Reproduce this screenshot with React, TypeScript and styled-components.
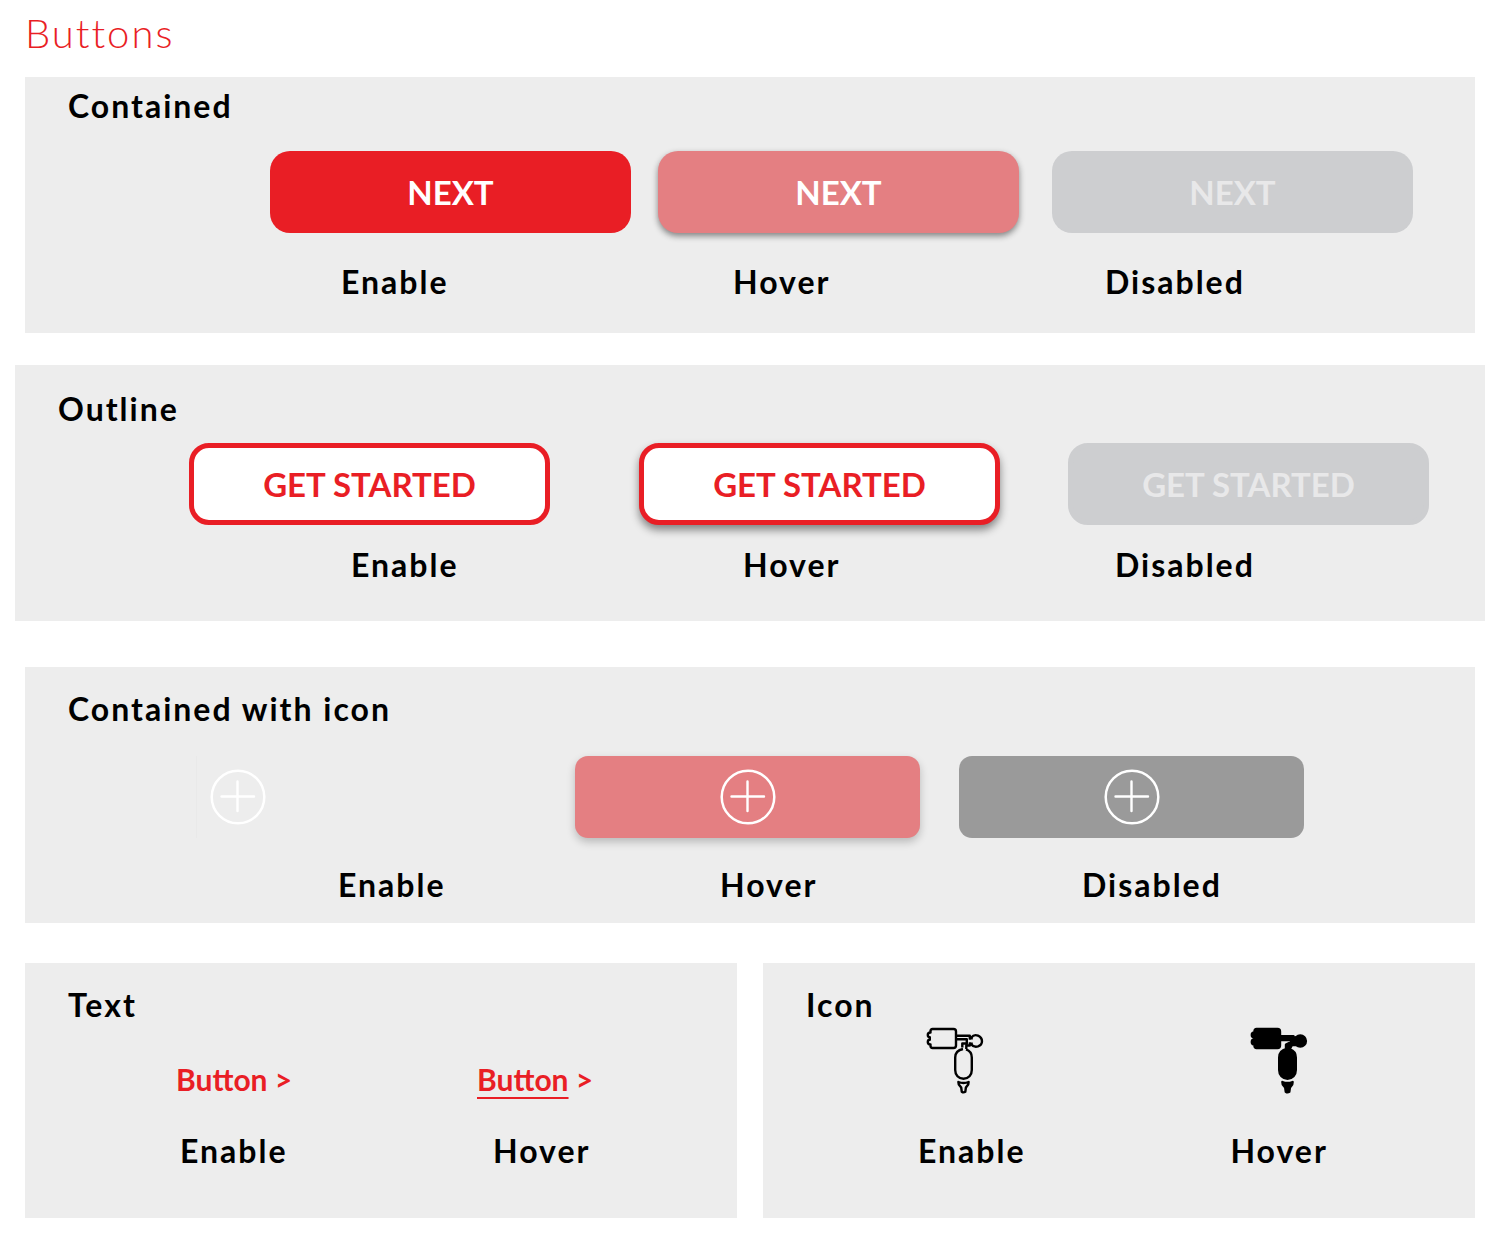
import React from "react";
import styled, { createGlobalStyle, css } from "styled-components";

const red = "#e91e25";
const softRed = "#e47f82";

const GlobalStyle = createGlobalStyle`
  *, *::before, *::after { box-sizing: border-box; }
  body {
    margin: 0;
    background: #fff;
    color: #000;
    font-family: Lato, "Open Sans", sans-serif;
  }
  button { font-family: inherit; cursor: pointer; }
  button:disabled { cursor: default; }
`;

const Page = styled.main`
  padding: 7px 15px 20px;
`;

const PageTitle = styled.h1`
  margin: 0 10px 18px;
  font-size: 40px;
  line-height: 52px;
  font-weight: 300;
  letter-spacing: 2px;
  color: ${red};
`;

const Panel = styled.section<{ $top: number; $bottom: number; $wide?: boolean }>`
  margin: 0 ${(p) => (p.$wide ? 0 : 10)}px;
  padding: ${(p) => p.$top}px 0 ${(p) => p.$bottom}px;
  background: #ededed;
`;

const Stack = styled.div<{ $gap: number }>`
  margin-top: ${(p) => p.$gap}px;
`;

const PanelPair = styled.div`
  display: grid;
  grid-template-columns: 1fr 1fr;
  gap: 26px;
  margin: 40px 10px 0;

  > section { margin: 0; }
`;

const labelText = css`
  font-size: 32px;
  line-height: 40px;
  font-weight: 700;
  letter-spacing: 2px;
`;

const PanelTitle = styled.h2`
  ${labelText}
  margin: 0;
  padding-left: 43px;
`;

const Row = styled.div<{ $inset: number; $columns: string; $gap: number }>`
  display: grid;
  grid-template-columns: ${(p) => p.$columns};
  justify-items: start;
  margin-top: ${(p) => p.$gap}px;
  padding-left: ${(p) => p.$inset}px;
`;

const StateLabel = styled.span`
  ${labelText}
`;

const BaseButton = styled.button`
  display: flex;
  align-items: center;
  justify-content: center;
  width: 361px;
  height: 82px;
  padding: 0;
  border: 0;
  border-radius: 20px;
  font-size: 33px;
  line-height: 40px;
  font-weight: 700;
`;

const ContainedButton = styled(BaseButton)<{ $hovered?: boolean }>`
  background: ${(p) => (p.$hovered ? softRed : red)};
  color: #fff;
  box-shadow: ${(p) => (p.$hovered ? "0 3px 6px rgba(0, 0, 0, 0.45)" : "none")};

  &:disabled { background: #cdced0; color: #e8e8e9; }
`;

const OutlineButton = styled(BaseButton)<{ $hovered?: boolean }>`
  border: 5px solid ${red};
  background: #fff;
  color: ${red};
  box-shadow: ${(p) => (p.$hovered ? "0 5px 9px rgba(0, 0, 0, 0.45)" : "none")};

  &:disabled { border-color: #cdced0; background: #cdced0; color: #e8e8e9; }
`;

const IconFillButton = styled(BaseButton)<{ $hovered?: boolean; $ghost?: boolean }>`
  width: 345px;
  border-radius: 13px;
  color: #fff;
  background: ${(p) => (p.$ghost ? "transparent" : softRed)};
  box-shadow: ${(p) => (p.$hovered ? "0 4px 9px rgba(0, 0, 0, 0.22)" : "none")};
  ${(p) =>
    p.$ghost &&
    css`
      justify-content: flex-start;
      padding-left: 13px;
      border-left: 1px solid #e9e9e9;
      border-radius: 0;
    `}

  &:disabled { background: #9a9a9a; }
`;

const TextButton = styled.button`
  padding: 0;
  border: 0;
  background: none;
  color: ${red};
  font-size: 30px;
  line-height: 40px;
  font-weight: 700;
  white-space: pre;
`;

const Underlined = styled.span`
  text-decoration: underline;
  text-decoration-thickness: 2px;
  text-underline-offset: 6px;
  text-decoration-skip-ink: none;
`;

const GlyphButton = styled.button`
  display: block;
  padding: 0;
  border: 0;
  background: none;
  color: #000;

  svg { display: block; }
`;

const PlusCircle = () => (
  <svg width="56" height="56" viewBox="0 0 56 56" fill="none" stroke="currentColor" strokeLinecap="round" aria-hidden="true">
    <circle cx="28" cy="28" r="26.3" strokeWidth="2.5" />
    <path d="M11.5 27.5H44M27.5 12.5V42" strokeWidth="2.4" />
  </svg>
);

const Airbrush = ({ filled }: { filled?: boolean }) => (
  <svg
    width="58"
    height="67"
    viewBox="0 0 58 67"
    fill={filled ? "currentColor" : "none"}
    stroke="currentColor"
    strokeWidth="2.4"
    strokeLinejoin="round"
    aria-hidden="true"
  >
    <path d="M6.5 2H27.5Q30 2 30 4.5V18.5Q30 21 27.5 21H6.5Q4.5 21 4.5 19V17.5Q1.8 17.5 1.8 15Q1.8 12.8 3.8 12.8V10.2Q1.8 10.2 1.8 8Q1.8 5.5 4.5 5.5V4Q4.5 2 6.5 2Z" />
    {filled ? (
      <>
        <path d="M31 9.2H43.5V13H31Z" />
        <circle cx="50.3" cy="14" r="5.6" />
        <path d="M43.5 10.5H47V18H42L39.5 22.5H36V17.5L39 16H41V13Z" />
      </>
    ) : (
      <>
        <path d="M30 8.7H43.8V12.5M30 12.3H40.8V16.5H36.3V20.5M43.8 15.5V18.5H40.3V22" />
        <path d="M45.3 10.5C47 8.3 49.5 7.6 52 8.6C57.4 11 57.2 17.8 52 19.4C49.3 20.1 46.8 19.3 45.3 17.4" />
        <path d="M43 11.3H46.8M43 16.7H46.8" />
      </>
    )}
    <path d="M37 22C32 23 29.2 26 29.2 30.5V43C29.2 48 32.5 51.8 37.5 51.8C42.5 51.8 45.8 48 45.8 43V30.5C45.8 26 43.5 23.5 40 22.3" />
    <path d="M32.4 55Q37.5 57 42.6 55L42.2 57.5L39.9 60.5L39.3 64.8Q37.5 66 35.8 64.8L35.2 60.5L32.8 57.5Z" />
  </svg>
);

const States = ({ names, ...row }: { names: string[]; $inset: number; $columns: string; $gap: number }) => (
  <Row {...row}>
    {names.map((name) => (
      <StateLabel key={name}>{name}</StateLabel>
    ))}
  </Row>
);

const three = ["Enable", "Hover", "Disabled"];
const two = ["Enable", "Hover"];

export default function App() {
  return (
    <>
      <GlobalStyle />
      <Page>
        <PageTitle>Buttons</PageTitle>

        <Panel $top={9} $bottom={31}>
          <PanelTitle>Contained</PanelTitle>
          <Row $inset={245} $columns="388fr 394fr 423fr" $gap={25}>
            <ContainedButton type="button">NEXT</ContainedButton>
            <ContainedButton type="button" $hovered>NEXT</ContainedButton>
            <ContainedButton type="button" disabled>NEXT</ContainedButton>
          </Row>
          <States names={three} $inset={316} $columns="392fr 372fr 370fr" $gap={29} />
        </Panel>

        <Stack $gap={32}>
          <Panel $top={24} $bottom={36} $wide>
            <PanelTitle>Outline</PanelTitle>
            <Row $inset={174} $columns="450fr 429fr 417fr" $gap={14}>
              <OutlineButton type="button">GET STARTED</OutlineButton>
              <OutlineButton type="button" $hovered>GET STARTED</OutlineButton>
              <OutlineButton type="button" disabled>GET STARTED</OutlineButton>
            </Row>
            <States names={three} $inset={336} $columns="392fr 372fr 370fr" $gap={20} />
          </Panel>
        </Stack>

        <Stack $gap={46}>
          <Panel $top={22} $bottom={18}>
            <PanelTitle>Contained with icon</PanelTitle>
            <Row $inset={171} $columns="379fr 384fr 516fr" $gap={27}>
              <IconFillButton type="button" aria-label="Add" $ghost><PlusCircle /></IconFillButton>
              <IconFillButton type="button" aria-label="Add" $hovered><PlusCircle /></IconFillButton>
              <IconFillButton type="button" aria-label="Add" disabled><PlusCircle /></IconFillButton>
            </Row>
            <States names={three} $inset={313} $columns="382fr 362fr 393fr" $gap={27} />
          </Panel>
        </Stack>

        <PanelPair>
          <Panel $top={22} $bottom={47}>
            <PanelTitle>Text</PanelTitle>
            <Row $inset={151} $columns="301fr 260fr" $gap={34}>
              <TextButton type="button">{"Button >"}</TextButton>
              <TextButton type="button"><Underlined>Button</Underlined>{" >"}</TextButton>
            </Row>
            <States names={two} $inset={155} $columns="313fr 244fr" $gap={32} />
          </Panel>
          <Panel $top={22} $bottom={47}>
            <PanelTitle>Icon</PanelTitle>
            <Row $inset={163} $columns="325fr 225fr" $gap={2}>
              <GlyphButton type="button" aria-label="Airbrush"><Airbrush /></GlyphButton>
              <GlyphButton type="button" aria-label="Airbrush"><Airbrush filled /></GlyphButton>
            </Row>
            <States names={two} $inset={155} $columns="313fr 245fr" $gap={37} />
          </Panel>
        </PanelPair>
      </Page>
    </>
  );
}
